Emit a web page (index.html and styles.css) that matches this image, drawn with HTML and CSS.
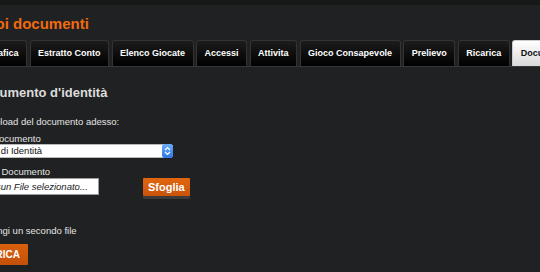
FILE: index.html
```html
<!DOCTYPE html>
<html lang="it">
<head>
    <meta charset="UTF-8">
    <title>I tuoi documenti</title>
    <link rel="stylesheet" href="styles.css">
</head>
<body>
    <div class="topbar"></div>
    <div class="page">
        <h1 class="title">I tuoi documenti</h1>

        <ul class="tabs">
            <li><a href="#">Anagrafica</a></li>
            <li><a href="#">Estratto Conto</a></li>
            <li><a href="#">Elenco Giocate</a></li>
            <li><a href="#">Accessi</a></li>
            <li><a href="#">Attivita</a></li>
            <li><a href="#">Gioco Consapevole</a></li>
            <li><a href="#">Prelievo</a></li>
            <li><a href="#">Ricarica</a></li>
            <li class="active"><a href="#">Documenti</a></li>
        </ul>

        <div class="panel">
            <h2>Documento d'identità</h2>
            <p class="intro">Fai l'upload del documento adesso:</p>

            <div class="field">
                <label>Tipo documento</label>
                <span class="select-wrap">
                    <select>
                        <option>Carta di Identità</option>
                        <option>Patente</option>
                        <option>Passaporto</option>
                    </select>
                    <span class="select-arrow">
                        <svg width="7" height="10" viewBox="0 0 7 10"><path d="M1 4 L3.5 1.5 L6 4 M1 6 L3.5 8.5 L6 6" fill="none" stroke="#fff" stroke-width="1.2"/></svg>
                    </span>
                </span>
            </div>

            <div class="field field-file">
                <label>Scegli Documento</label>
                <div class="file-row">
                    <input type="text" class="file-name" value="Nessun File selezionato..." readonly>
                    <button class="btn btn-browse">Sfoglia</button>
                </div>
            </div>

            <p class="add-file">Aggiungi un secondo file</p>
            <button class="btn btn-upload">CARICA</button>
        </div>
    </div>
</body>
</html>
```

FILE: styles.css
```css
body {
    margin: 0;
    background: #202122;
    color: #e4e4e4;
    font-family: "Liberation Sans", Arial, sans-serif;
    overflow: hidden;
}
.topbar {
    height: 5px;
    background: #171818;
}
.page {
    margin-left: -27px;
}
.title {
    margin: 10px 0 0 0;
    font-size: 15px;
    line-height: 18px;
    color: #f06a10;
}
.tabs {
    list-style: none;
    display: flex;
    gap: 2.5px;
    margin: 7px 0 0 -9.5px;
    padding: 0;
    border-bottom: 1px solid #363738;
    white-space: nowrap;
}
.tabs li {
    flex: none;
}
.tabs a {
    display: block;
    height: 25px;
    line-height: 25px;
    padding: 0 7.5px;
    border: 1px solid #333;
    border-bottom: none;
    border-radius: 3px 3px 0 0;
    background: linear-gradient(#1c1c1c, #000);
    color: #fff;
    font-size: 9px;
    font-weight: bold;
    text-decoration: none;
}
.tabs .active a {
    background: linear-gradient(#fff, #d9d9d9);
    border-color: #ccc;
    color: #111;
}
.panel {
    padding-top: 18px;
}
.panel h2 {
    margin: 0 0 0 2px;
    font-size: 13px;
    line-height: 16px;
    color: #dcdcdc;
}
.intro,
.add-file {
    margin: 15px 0 0;
    font-size: 9.5px;
    line-height: 12px;
}
.intro {
    margin-left: -3px;
}
.field label {
    display: block;
    font-size: 9.5px;
    line-height: 11px;
}
.field {
    margin-top: 5px;
}
.field-file {
    margin-top: 8px;
}
.select-wrap {
    position: relative;
    display: block;
    width: 200px;
}
.select-wrap select {
    appearance: none;
    -webkit-appearance: none;
    display: block;
    width: 200px;
    height: 14px;
    margin: 0;
    padding: 0 1px;
    border: 1px solid #b9b9b9;
    border-radius: 3px;
    background: #fff;
    color: #111;
    font-family: inherit;
    font-size: 9.5px;
    line-height: 12px;
}
.select-arrow {
    position: absolute;
    right: 0;
    top: 0;
    width: 11px;
    height: 14px;
    display: flex;
    align-items: center;
    justify-content: center;
    border-radius: 3px;
    background: linear-gradient(#6aaaf8, #2c78e6);
}
.file-row {
    display: flex;
    align-items: flex-start;
    gap: 44px;
    margin-top: 1px;
}
.file-name {
    width: 124px;
    height: 17px;
    box-sizing: border-box;
    margin: 0 0 0 2px;
    padding: 0 3px;
    border: 1px solid #9a9a9a;
    background: #fff;
    color: #222;
    font-family: inherit;
    font-size: 9.5px;
    font-style: italic;
}
.btn {
    border: none;
    border-radius: 1px;
    background: linear-gradient(#e2660f, #c9540a);
    color: #fff;
    font-family: inherit;
    font-weight: bold;
    cursor: pointer;
}
.btn-browse {
    height: 18px;
    padding: 0 5px;
    font-size: 11px;
    box-shadow: 0 3px 0 #3a3a3a;
}
.add-file {
    margin-top: 29px;
}
.btn-upload {
    display: block;
    margin-top: 7px;
    height: 21px;
    padding: 0 8px;
    font-size: 10px;
    background: linear-gradient(#d9600e, #c4500a);
}
```
